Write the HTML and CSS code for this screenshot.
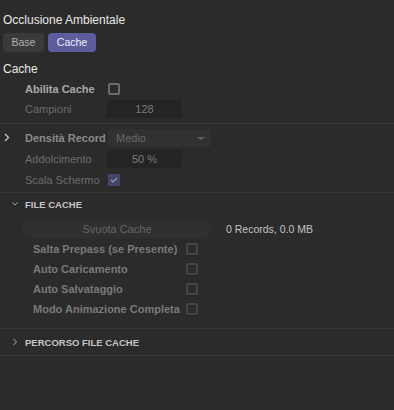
FILE: index.html
```html
<!DOCTYPE html>
<html lang="it">
<head>
    <meta charset="UTF-8">
    <meta name="viewport" content="width=device-width, initial-scale=1.0">
    <title>Occlusione Ambientale</title>
    <link rel="stylesheet" href="styles.css">
</head>
<body>
    <div class="panel">
        <div class="panel-title">Occlusione Ambientale</div>
        <div class="tabs">
            <span class="tab">Base</span>
            <span class="tab active">Cache</span>
        </div>

        <div class="group-title">Cache</div>
        <div class="rows top-rows">
            <div class="row">
                <span></span>
                <span class="label strong">Abilita Cache</span>
                <span class="check"></span>
            </div>
            <div class="row">
                <span></span>
                <span class="label dim">Campioni</span>
                <span class="field">128</span>
            </div>
        </div>

        <div class="section density">
            <div class="row">
                <span class="toggle">
                    <svg width="6" height="9" viewBox="0 0 6 9"><path d="M1 1 L4.5 4.5 L1 8" fill="none" stroke="#c4c4c4" stroke-width="1.3"/></svg>
                </span>
                <span class="label mid">Densità Record</span>
                <span class="select">Medio<i class="caret"></i></span>
            </div>
            <div class="row">
                <span></span>
                <span class="label dim">Addolcimento</span>
                <span class="field">50 %</span>
            </div>
            <div class="row">
                <span></span>
                <span class="label dim">Scala Schermo</span>
                <span class="check checked">
                    <svg width="8" height="6" viewBox="0 0 8 6"><path d="M1 3 L3 5 L7 1" fill="none" stroke="#9a9ab0" stroke-width="1.2"/></svg>
                </span>
            </div>
        </div>

        <div class="section file-cache">
            <div class="section-head">
                <svg width="6" height="4" viewBox="0 0 6 4"><path d="M0.5 0.5 L3 3 L5.5 0.5" fill="none" stroke="#a8a8a8" stroke-width="1"/></svg>
                <span>FILE CACHE</span>
            </div>
            <div class="cache-actions">
                <span class="button">Svuota Cache</span>
                <span class="info">0 Records, 0.0 MB</span>
            </div>
            <div class="rows cache-rows">
                <div class="crow"><span class="label faded">Salta Prepass (se Presente)</span><span class="check faint"></span></div>
                <div class="crow"><span class="label faded">Auto Caricamento</span><span class="check faint"></span></div>
                <div class="crow"><span class="label faded">Auto Salvataggio</span><span class="check faint"></span></div>
                <div class="crow"><span class="label faded">Modo Animazione Completa</span><span class="check faint"></span></div>
            </div>
        </div>

        <div class="section path">
            <div class="section-head closed">
                <svg width="6" height="8" viewBox="0 0 6 8"><path d="M1.5 0.8 L4.5 4 L1.5 7.2" fill="none" stroke="#a8a8a8" stroke-width="1"/></svg>
                <span>PERCORSO FILE CACHE</span>
            </div>
        </div>
    </div>
</body>
</html>
```

FILE: styles.css
```css
* {
    margin: 0;
    padding: 0;
    box-sizing: border-box;
}

body {
    background: #2b2b2b;
    font-family: 'Liberation Sans', Arial, sans-serif;
    font-size: 11px;
    color: #c8c8c8;
    width: 394px;
    height: 410px;
    overflow: hidden;
}

.panel-title {
    padding: 10px 3px 0;
    height: 30px;
    line-height: 20px;
    font-size: 12px;
    color: #e8e8e8;
}

.tabs {
    display: flex;
    gap: 4px;
    padding-left: 3px;
    margin-top: 3px;
}

.tab {
    height: 19px;
    line-height: 19px;
    border-radius: 4px;
    background: #3a3a3a;
    color: #b0b0b0;
    font-size: 10.5px;
    text-align: center;
    width: 41px;
}

.tab.active {
    width: 48px;
    background: #5d5d9e;
    color: #eeeef8;
}

.group-title {
    margin-top: 7px;
    padding-left: 3px;
    height: 20px;
    line-height: 20px;
    font-size: 12px;
    color: #e8e8e8;
}

.rows {
    display: flex;
    flex-direction: column;
}

.top-rows {
    margin-bottom: 4px;
}

.row {
    display: grid;
    grid-template-columns: 25px 83px auto;
    align-items: center;
    height: 20px;
}

.toggle {
    display: flex;
    padding-left: 4px;
    margin-top: -1px;
}

.label {
    white-space: nowrap;
}

.label.strong {
    font-weight: bold;
    color: #a9a9a9;
}

.label.mid {
    font-weight: bold;
    color: #8a8a8a;
}

.label.dim {
    color: #6c6c6c;
}

.label.faded {
    font-weight: bold;
    color: #7a7a7a;
}

.check {
    width: 12px;
    height: 12px;
    border: 2px solid #6c6c6c;
    border-radius: 2px;
    display: flex;
    align-items: center;
    justify-content: center;
}

.check.faint {
    border-color: #454545;
}

.check.checked {
    border: none;
    background: #45456a;
}

.field {
    width: 75px;
    height: 18px;
    line-height: 18px;
    margin-left: -1px;
    background: #242424;
    border-radius: 3px;
    text-align: center;
    color: #7c7c7c;
}

.select {
    position: relative;
    width: 103px;
    height: 18px;
    line-height: 18px;
    padding-left: 8px;
    background: #313131;
    border-radius: 3px;
    color: #686868;
}

.caret {
    position: absolute;
    right: 6px;
    top: 8px;
    border-left: 4px solid transparent;
    border-right: 4px solid transparent;
    border-top: 3px solid #626262;
}

.section {
    border-top: 1px solid #393939;
}

.density {
    display: flex;
    flex-direction: column;
    gap: 1px;
    padding: 4px 0 2px;
}

.section-head {
    display: flex;
    align-items: center;
    height: 22px;
    padding-left: 12px;
    font-size: 9.5px;
    font-weight: bold;
    color: #c6c6c6;
}

.section-head svg {
    margin-right: 7px;
}

.file-cache {
    padding-bottom: 9px;
}

.cache-actions {
    display: flex;
    align-items: center;
    gap: 14px;
    margin: 5px 0 1px;
    padding-left: 22px;
}

.button {
    width: 190px;
    height: 18px;
    line-height: 18px;
    border-radius: 9px;
    background: #303030;
    text-align: center;
    color: #666666;
}

.info {
    color: #c4c4c4;
    font-size: 10.5px;
}

.crow {
    display: grid;
    grid-template-columns: 153px auto;
    align-items: center;
    height: 20px;
    padding-left: 33px;
}

.path {
    border-bottom: 1px solid #393939;
}

.section-head.closed {
    height: 26px;
    padding-left: 12px;
}
```
